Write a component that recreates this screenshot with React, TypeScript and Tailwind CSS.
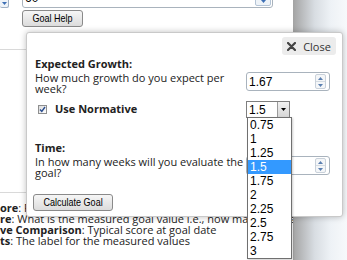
import React from "react";

const sans = "font-['Open_Sans',sans-serif]";
const arial = "font-['Liberation_Sans',Arial,sans-serif]";

const options = ["0.75", "1", "1.25", "1.5", "1.75", "2", "2.25", "2.5", "2.75", "3"];

const Spinner = () => (
  <div className="flex h-[15px] w-[11px] flex-col rounded-[2px] border border-[#c9d1da] bg-[#f4f6f8]">
    <div className="flex flex-1 items-center justify-center border-b border-[#d4dbe2]">
      <svg width="5" height="3" viewBox="0 0 5 3">
        <path d="M0 3 L2.5 0 L5 3 Z" fill="#5a7fb0" />
      </svg>
    </div>
    <div className="flex flex-1 items-center justify-center">
      <svg width="5" height="3" viewBox="0 0 5 3">
        <path d="M0 0 L2.5 3 L5 0 Z" fill="#5a7fb0" />
      </svg>
    </div>
  </div>
);

const NumberBox = ({ value }: { value: string }) => (
  <div className="flex h-[19px] w-[85px] items-center justify-between rounded-[3px] border border-[#a9b3bd] bg-white pl-[2px] pr-[3px]">
    <span className={`${arial} text-[12px] leading-none text-black`}>{value}</span>
    <Spinner />
  </div>
);

// narrow system-button look: Arial squeezed to the width of Arial Narrow
const GrayButton = ({ children, className = "" }: { children: React.ReactNode; className?: string }) => (
  <button
    className={`${arial} flex h-[17px] items-center justify-center rounded-[3px] border border-[#8a8a8a] bg-gradient-to-b from-[#f6f6f6] to-[#dcdcdc] text-[11px] leading-none text-black ${className}`}
  >
    <span className="inline-block scale-x-[0.82] whitespace-nowrap">{children}</span>
  </button>
);

export default function App() {
  return (
    <div className={`relative h-[260px] w-[347px] overflow-hidden bg-white ${sans}`}>
      {/* page behind the dialog */}
      <div className="flex h-full">
        <div className="w-[293px] shrink-0 bg-white">
          <div className="-mt-[12px] flex h-[20px] items-end">
            <div className="flex h-[20px] w-[9px] items-end justify-center rounded-b-[2px] border border-l-0 border-[#9fb0c4] bg-[#eef3f8] pb-[2px]">
              <svg width="5" height="3" viewBox="0 0 5 3">
                <path d="M0 0 L2.5 3 L5 0 Z" fill="#3d6fb5" />
              </svg>
            </div>
            <div className="ml-[13px] flex h-[20px] w-[251px] items-end justify-between rounded-[3px] border border-[#a9b3bd] pl-[2px] pr-[1px] pb-[1px]">
              <span className={`${arial} mb-[2px] text-[12px] leading-none`}>60</span>
              <div className="flex h-[17px] w-[16px] items-end justify-center rounded-[2px] border border-[#b4c4d6] bg-[#eef3f8] pb-[2px]">
                <svg width="5" height="3" viewBox="0 0 5 3">
                  <path d="M0 0 L2.5 3 L5 0 Z" fill="#3d6fb5" />
                </svg>
              </div>
            </div>
          </div>
          <GrayButton className="ml-[22px] mt-[2px] w-[61px]">Goal Help</GrayButton>
          <div className="mt-[22px] border-t border-[#d9d9d9]" />
          <div className="mt-[142px] border-t border-[#d9d9d9]" />
          <div className="pt-[9px] text-[11px] leading-[11px] text-[#222]">
            <p className="whitespace-nowrap"><b>ore</b>: Final score for the goal period</p>
            <p className="whitespace-nowrap"><b>re</b>: What is the measured goal value i.e., how many words</p>
            <p className="whitespace-nowrap"><b>ve Comparison</b>: Typical score at goal date</p>
            <p className="whitespace-nowrap"><b>ts</b>: The label for the measured values</p>
          </div>
        </div>
        <div className="flex-1 bg-[linear-gradient(to_right,#a3a3a3,#d8dde2_40%,#eef2f6_70%,#f7f9fb)]" />
      </div>

      {/* goal dialog */}
      <div className="absolute left-[26px] top-[32px] h-[185px] w-[317px] rounded-[3px] border border-[#c9c9c9] bg-white pl-[8px] pr-[12px] text-[11px] text-[#222] shadow-[0_0_6px_rgba(0,0,0,0.25)]">
        <div className="-mr-[6px] flex justify-end pt-[4px]">
          <button className="flex h-[18px] w-[54px] items-center justify-center gap-[7px] rounded-[3px] bg-[#ececec] text-[#333]">
            <svg width="9" height="9" viewBox="0 0 9 9">
              <path d="M1 1 L8 8 M8 1 L1 8" stroke="#444" strokeWidth="2.2" strokeLinecap="round" />
            </svg>
            <span className="leading-none">Close</span>
          </button>
        </div>

        <p className="mt-[1px] font-bold leading-[15px]">Expected Growth:</p>
        <div className="mt-[1px] flex items-start justify-between">
          <p className="w-[214px] leading-[11px]">How much growth do you expect per week?</p>
          <NumberBox value="1.67" />
        </div>
        <div className="mt-[7px] flex items-center justify-between">
          <label className="flex items-center gap-[8px] pl-[3px] font-bold">
            <span className="flex h-[9px] w-[9px] items-center justify-center border border-[#8e8f8f] bg-gradient-to-br from-[#dcdcdc] to-white">
              <svg width="7" height="7" viewBox="0 0 7 7">
                <path d="M1 3.5 L2.8 5.5 L6 1" stroke="#2a4d8f" strokeWidth="1.4" fill="none" />
              </svg>
            </span>
            Use Normative
          </label>
          <div className="relative mr-[40px]">
            <div className="flex h-[17px] w-[44px] items-center justify-between border border-[#7f7f7f] bg-white pl-[2px]">
              <span className={`${arial} text-[12px] leading-none text-black`}>1.5</span>
              <div className="flex h-full w-[12px] items-center justify-center border-l border-[#9a9a9a] bg-gradient-to-b from-[#f2f2f2] to-[#d6d6d6]">
                <svg width="5" height="3" viewBox="0 0 5 3">
                  <path d="M0 0 L2.5 3 L5 0 Z" fill="#000" />
                </svg>
              </div>
            </div>
            <ul className={`${arial} absolute left-[1px] top-[16px] z-10 w-[45px] border border-[#707070] bg-white text-[12px] text-black shadow-[1px_1px_2px_rgba(0,0,0,0.2)]`}>
              {options.map((o) => (
                <li
                  key={o}
                  className={`flex h-[14px] items-center pl-[2px] leading-none ${o === "1.5" ? "bg-[#3399ff] text-white" : ""}`}
                >
                  {o}
                </li>
              ))}
            </ul>
          </div>
        </div>

        <p className="mt-[22px] font-bold leading-[15px]">Time:</p>
        <div className="mt-[1px] flex items-start justify-between">
          <p className="w-[214px] leading-[11px]">In how many weeks will you evaluate the goal?</p>
          <NumberBox value="" />
        </div>

        <GrayButton className="-ml-[2px] mt-[16px] w-[80px]">Calculate Goal</GrayButton>
      </div>
    </div>
  );
}
